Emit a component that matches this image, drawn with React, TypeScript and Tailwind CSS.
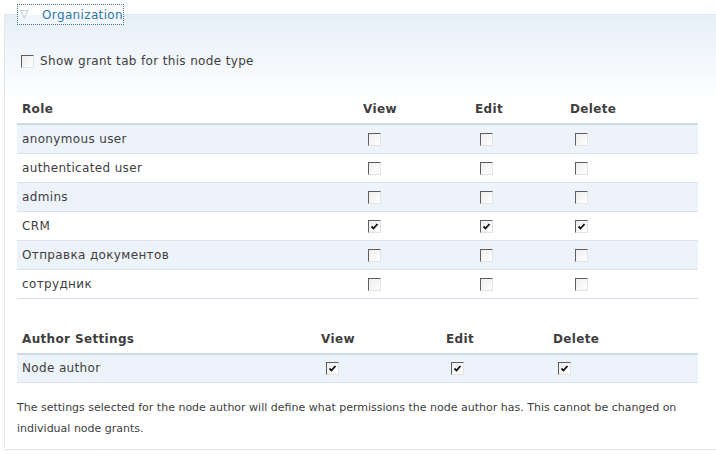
import type { ReactNode } from 'react';

type Perm = { name: string; view: boolean; edit: boolean; del: boolean };

const roles: Perm[] = [
  { name: 'anonymous user', view: false, edit: false, del: false },
  { name: 'authenticated user', view: false, edit: false, del: false },
  { name: 'admins', view: false, edit: false, del: false },
  { name: 'CRM', view: true, edit: true, del: true },
  { name: 'Отправка документов', view: false, edit: false, del: false },
  { name: 'сотрудник', view: false, edit: false, del: false },
];

function Box({ checked }: { checked?: boolean }) {
  return (
    <span className="inline-flex h-[13px] w-[13px] items-center justify-center border-t border-l border-t-[#5e5e5e] border-l-[#5e5e5e] border-b border-r border-b-[#e4e4e4] border-r-[#e4e4e4] bg-gradient-to-br from-[#eeeeee] to-white align-middle">
      {checked && (
        <svg width="9" height="9" viewBox="0 0 9 9">
          <path d="M1.5 4.5 L3.5 6.5 L7.5 2" fill="none" stroke="#111" strokeWidth="1.8" />
        </svg>
      )}
    </span>
  );
}

function Head({ children, w }: { children: ReactNode; w?: string }) {
  return <th className={`${w ?? ''} px-[5px] pb-[5px] text-left font-bold`}>{children}</th>;
}

function Cell({ children, w }: { children: ReactNode; w?: string }) {
  return <td className={`${w ?? ''} h-[29px] px-[5px]`}>{children}</td>;
}

function CheckCell({ checked }: { checked: boolean }) {
  return (
    <td className="h-[29px] pl-[10px]">
      <Box checked={checked} />
    </td>
  );
}

export default function App() {
  return (
    <div className="h-[454px] w-[716px] bg-white pt-[4px] pl-[4px] text-[12px] tracking-[0.35px] text-[#3e3e3e] [font-family:'DejaVu_Sans',Verdana,sans-serif]">
      <fieldset className="h-[446px] w-[707px] border border-[#e1e8ef] bg-gradient-to-b from-[#e6eff8] via-white via-[20%] to-white px-[12px]">
        <legend className="flex h-[21px] w-[107px] items-center border border-dotted border-[#3c7594] bg-white/40 text-[#2b78a6]">
          <span className="ml-[2px] w-[23px] text-[11px] text-[#a3b7c7]">▽</span>
          <span>Organization</span>
        </legend>

        <label className="mt-[27px] flex items-center gap-[6px] pl-[4px]">
          <Box />
          <span>Show grant tab for this node type</span>
        </label>

        <table className="mt-[30px] w-[681px] table-fixed border-collapse">
          <thead>
            <tr className="border-b-2 border-[#cddbe9]">
              <Head w="w-[341px]">Role</Head>
              <Head w="w-[112px]">View</Head>
              <Head w="w-[95px]">Edit</Head>
              <Head>Delete</Head>
            </tr>
          </thead>
          <tbody>
            {roles.map((r, i) => (
              <tr key={r.name} className={`border-b border-[#d8e3ee] ${i % 2 === 0 ? 'bg-[#edf3fa]' : 'bg-white'}`}>
                <Cell>{r.name}</Cell>
                <CheckCell checked={r.view} />
                <CheckCell checked={r.edit} />
                <CheckCell checked={r.del} />
              </tr>
            ))}
          </tbody>
        </table>

        <table className="mt-[31px] w-[681px] table-fixed border-collapse">
          <thead>
            <tr className="border-b-2 border-[#cddbe9]">
              <Head w="w-[299px]">Author Settings</Head>
              <Head w="w-[125px]">View</Head>
              <Head w="w-[107px]">Edit</Head>
              <Head>Delete</Head>
            </tr>
          </thead>
          <tbody>
            <tr className="border-b border-[#d8e3ee] bg-[#edf3fa]">
              <Cell>Node author</Cell>
              <CheckCell checked />
              <CheckCell checked />
              <CheckCell checked />
            </tr>
          </tbody>
        </table>

        <p className="mt-[14px] w-[690px] text-[11px] leading-[21px] tracking-normal">
          The settings selected for the node author will define what permissions the node author has. This cannot be changed on individual node grants.
        </p>
      </fieldset>
    </div>
  );
}
